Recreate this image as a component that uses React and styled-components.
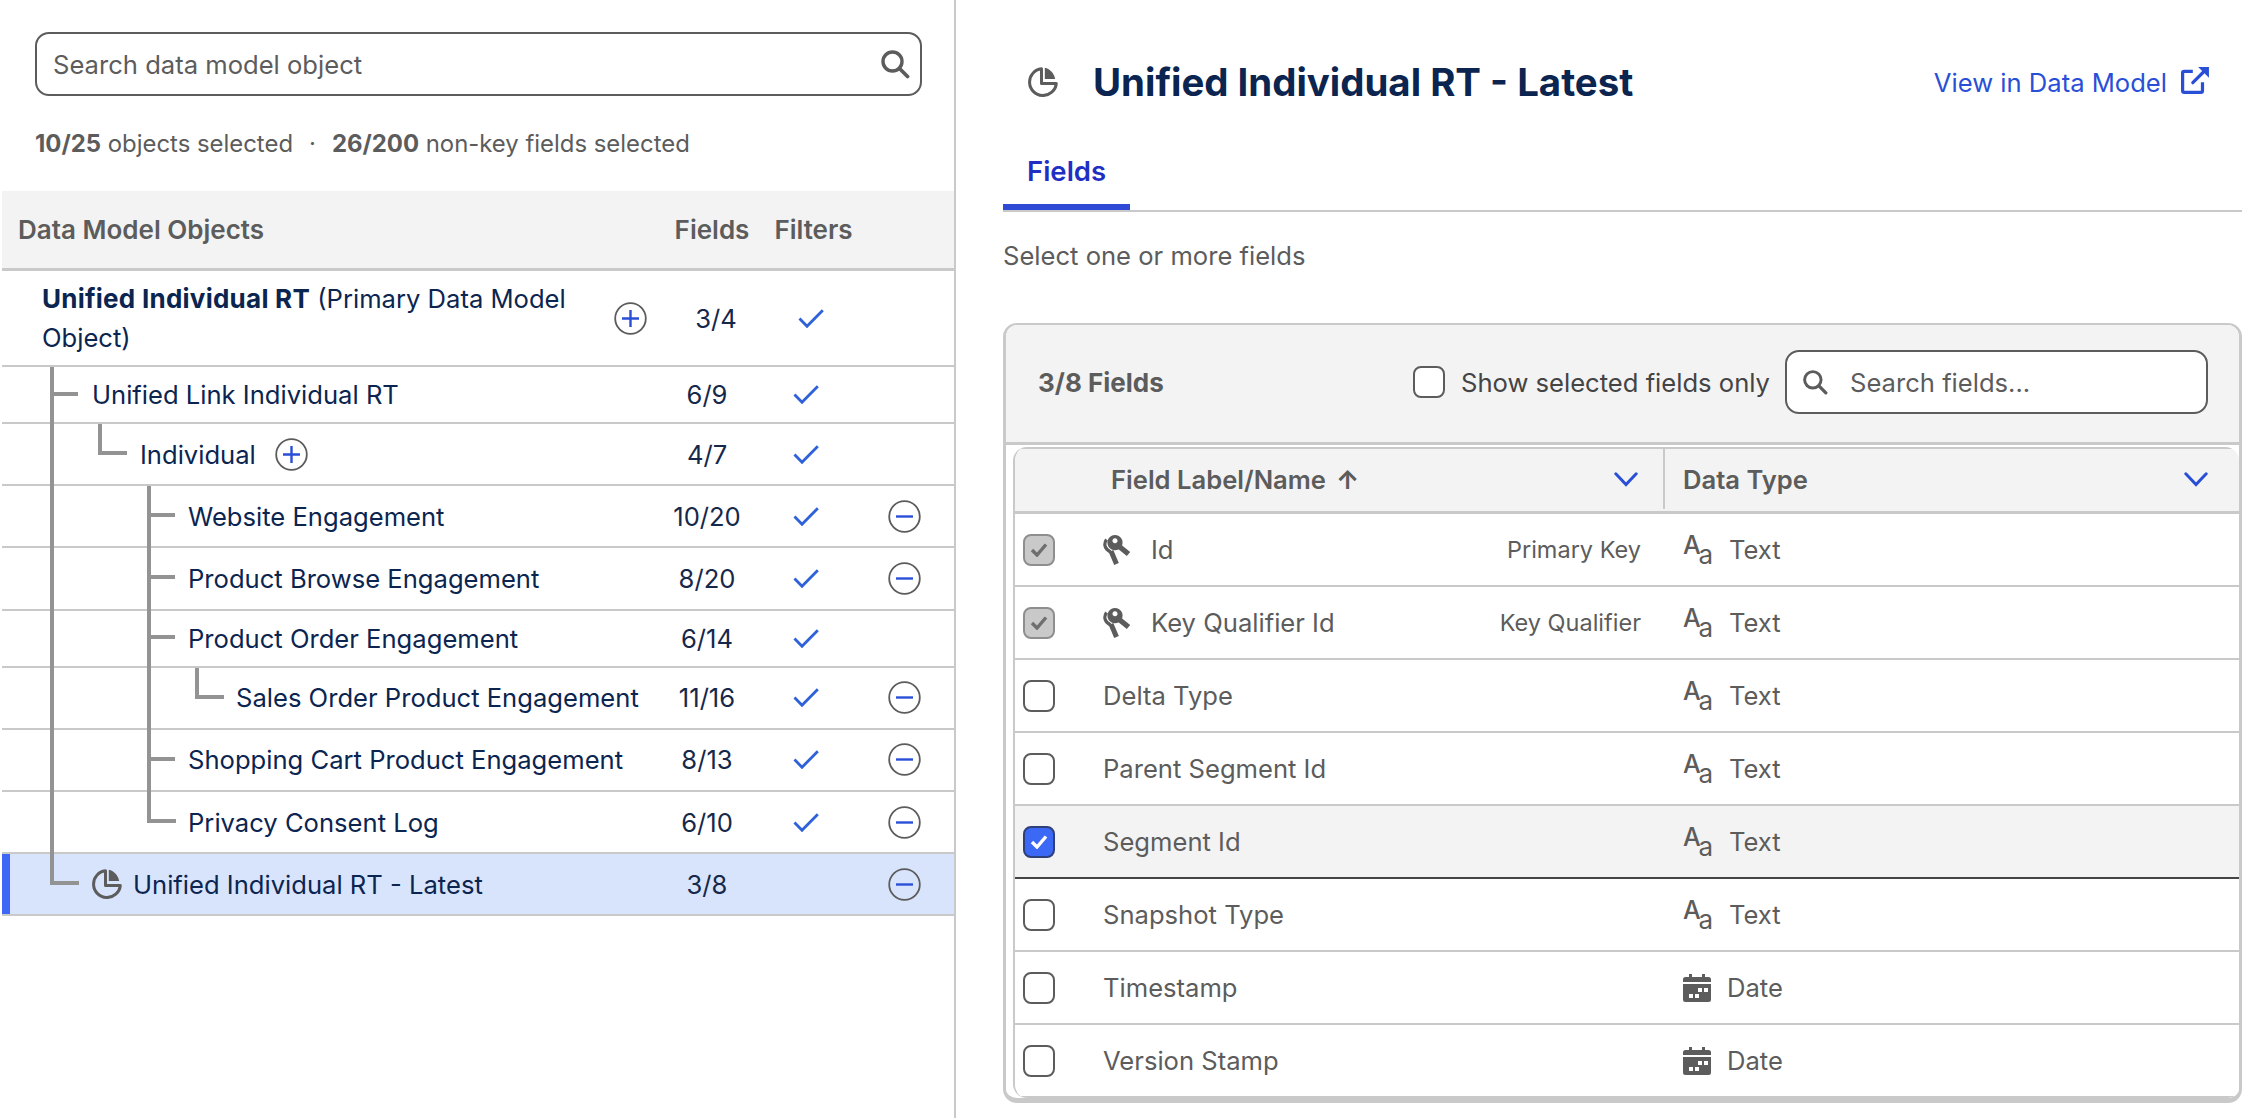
import React from "react";
import styled, { createGlobalStyle } from "styled-components";

const GlobalStyle = createGlobalStyle`
  html, body {
    margin: 0;
    padding: 0;
    background: #fff;
    font-family: Inter, "Liberation Sans", sans-serif;
  }
  * {
    box-sizing: border-box;
  }
`;

const Page = styled.div`
  display: flex;
  width: 2266px;
  height: 1118px;
  overflow: hidden;
`;

/* left side */
const LeftPanel = styled.div`
  width: 956px;
  flex-shrink: 0;
  padding-left: 2px;
  border-right: 2px solid #c9c9c9;
`;

const SearchArea = styled.div`
  padding: 32px 32px 0 33px;
`;

const SearchBox = styled.div`
  display: flex;
  align-items: center;
  justify-content: space-between;
  height: 64px;
  padding: 0 10px 0 16px;
  border: 2px solid #5c5c5c;
  border-radius: 14px;
  background: #fff;
`;

const Placeholder = styled.span`
  font-size: 25.6px;
  color: #5c5c5c;
`;

const Stats = styled.div`
  margin-top: 32px;
  height: 32px;
  line-height: 32px;
  font-size: 23.9px;
  color: #5c5c5c;

  b {
    font-weight: 700;
  }
  i {
    font-style: normal;
    margin: 0 16px;
  }
`;

const TableHead = styled.div`
  display: grid;
  grid-template-columns: 1fr 100px 103px 89px;
  align-items: center;
  margin-top: 31px;
  height: 80px;
  padding-left: 16px;
  background: #f3f3f3;
  border-bottom: 3px solid #c9c9c9;
  font-size: 26px;
  font-weight: 600;
  color: #5c5c5c;
`;

const HeadCell = styled.span`
  text-align: center;
`;

const Row = styled.div`
  position: relative;
  display: grid;
  grid-template-columns: ${(p) => (p.$primary ? "1fr 100px 90px 98px" : "1fr 100px 98px 99px")};
  align-items: center;
  padding: 8px 0 8px ${(p) => p.$indent}px;
  border-bottom: 2px solid #c9c9c9;
  background: ${(p) => (p.$selected ? "#d8e4fc" : "#fff")};
  box-shadow: ${(p) => (p.$selected ? "inset 8px 0 0 #3c68f5" : "none")};
  font-size: 25.6px;
  line-height: 39px;
  color: #0b2550;
`;

const NameCell = styled.div`
  display: flex;
  align-items: center;
  gap: ${(p) => (p.$wide ? "19px" : "16px")};
`;

const PrimaryName = styled.div`
  width: 556px;

  b {
    font-size: 26px;
    letter-spacing: 0.25px;
    font-weight: 700;
  }
`;

const CountCell = styled.div`
  text-align: center;
  color: #16284a;
`;

const IconCell = styled.div`
  display: flex;
  justify-content: center;
  align-items: center;
`;

const RoundButton = styled.span`
  display: flex;
  align-items: center;
  justify-content: center;
  height: 44.2px;
`;

/* tree connector lines sit on top of the row borders */
const Guide = styled.span`
  position: absolute;
  top: 0;
  bottom: -2px;
  left: ${(p) => p.$x - 2}px;
  width: 4px;
  background: #939393;
`;

const Tick = styled.span`
  position: absolute;
  top: calc(50% - 3px);
  left: ${(p) => p.$x - 2}px;
  width: 28px;
  height: 4px;
  background: #939393;
`;

const Elbow = styled.span`
  position: absolute;
  top: 0;
  left: ${(p) => p.$x - 2}px;
  width: 29px;
  height: calc(50% + 1px);
  border-left: 4px solid #939393;
  border-bottom: 4px solid #939393;
`;

const RowIcon = styled.span`
  display: flex;
  margin-right: -5px;
`;

/* right side */
const RightPanel = styled.div`
  flex: 1;
  min-width: 0;
  padding: 52px 24px 0 47px;
`;

const TitleRow = styled.div`
  display: flex;
  align-items: center;
  height: 60px;
  padding: 0 32px 0 25px;
`;

const Title = styled.h1`
  flex: 1;
  margin: 0 0 0 35px;
  font-size: 38.4px;
  font-weight: 700;
  color: #0b2550;
`;

const ViewLink = styled.a`
  display: flex;
  align-items: center;
  gap: 14px;
  font-size: 25.6px;
  color: #2a4fd7;

  svg {
    margin-top: -5px;
  }
`;

const Tabs = styled.div`
  display: flex;
  margin-top: 24px;
  border-bottom: 2px solid #c9c9c9;
`;

const Tab = styled.div`
  padding: 18px 24px 0;
  height: 74px;
  line-height: 34px;
  font-size: 27.5px;
  font-weight: 600;
  color: #1f2fc4;
  border-bottom: 6px solid #2f4bd6;
`;

const Hint = styled.div`
  margin-top: 30px;
  line-height: 28px;
  font-size: 25.6px;
  color: #5c5c5c;
`;

const Card = styled.div`
  margin-top: 53px;
  height: 780px;
  border: 3px solid #c9c9c9;
  border-top-width: 2px;
  border-bottom-width: 5px;
  border-radius: 14px;
  background: #fff;
  overflow: hidden;
`;

const Toolbar = styled.div`
  display: flex;
  align-items: center;
  height: 120px;
  padding: 0 31px 3px 32px;
  background: #f3f3f3;
  border-bottom: 3px solid #c9c9c9;
`;

const ToolbarCount = styled.span`
  flex: 1;
  font-size: 26px;
  font-weight: 700;
  color: #5c5c5c;
`;

const ShowSelected = styled.label`
  display: flex;
  align-items: center;
  gap: 16px;
  margin-right: 15px;
  font-size: 25.6px;
  color: #444;
`;

const CheckBox = styled.span`
  display: flex;
  align-items: center;
  justify-content: center;
  width: 32px;
  height: 32px;
  border: 2px solid ${(p) => (p.$state === "checked" ? "#2f3f78" : p.$state === "locked" ? "#8e8e8e" : "#5c5c5c")};
  border-radius: 8px;
  background: ${(p) => (p.$state === "checked" ? "#3b68f5" : p.$state === "locked" ? "#c9c9c9" : "#fff")};
`;

const FieldSearch = styled.div`
  display: flex;
  align-items: center;
  gap: 22px;
  width: 423px;
  height: 64px;
  padding-left: 15px;
  border: 2px solid #5c5c5c;
  border-radius: 14px;
  background: #fff;
`;

const FieldTable = styled.div`
  margin: 2px 0 0 7px;
  border-left: 2px solid #c9c9c9;
  border-radius: 14px 14px 0 14px;
  overflow: hidden;
`;

const FieldHead = styled.div`
  display: grid;
  grid-template-columns: 88px 560px 1fr;
  height: 67px;
  padding-bottom: 2px;
  align-items: center;
  background: #f3f3f3;
  border-top: 2px solid #c9c9c9;
  border-bottom: 3px solid #c9c9c9;
  font-size: 25.6px;
  font-weight: 600;
  color: #5c5c5c;
`;

const FieldHeadCell = styled.div`
  display: flex;
  align-items: center;
  justify-content: space-between;
  height: 60px;
  padding: 0 ${(p) => p.$right}px 0 ${(p) => p.$left}px;
  border-left: ${(p) => (p.$divided ? "2px solid #c9c9c9" : "none")};
`;

const SortArrow = styled.span`
  margin-left: 10px;
  font-weight: 700;
`;

const FieldRow = styled.div`
  display: grid;
  grid-template-columns: 88px 560px 1fr;
  align-items: center;
  height: 73px;
  background: ${(p) => (p.$active ? "#f3f3f3" : "#fff")};
  border-bottom: 2px solid ${(p) => (p.$active ? "#444" : "#c9c9c9")};
  font-size: 25.6px;
  color: #5c5c5c;
`;

const CheckCell = styled.div`
  padding-left: 8px;
`;

const LabelCell = styled.div`
  display: flex;
  align-items: center;
  gap: 20px;
  padding-right: 22px;
`;

const FieldName = styled.span`
  flex: 1;
`;

const KeyRole = styled.span`
  font-size: 23.5px;
`;

const TypeCell = styled.div`
  display: flex;
  align-items: center;
  gap: 16px;
  padding-left: 20px;
`;

const TypeGlyph = styled.span`
  position: relative;
  display: block;
  width: 30px;
  height: 30px;
  color: #5c5c5c;
`;

const GlyphUpper = styled.span`
  position: absolute;
  top: 0;
  left: 0;
  line-height: 20px;
  font-size: 25px;
  font-weight: 500;
`;

const GlyphLower = styled.span`
  position: absolute;
  right: 0;
  bottom: 0;
  line-height: 20px;
  font-size: 26px;
`;

const Check = () => (
  <svg width="26" height="19" viewBox="0 0 26 19" fill="none">
    <path d="M1.5 9.5 L9 17.3 L24.8 1.2" stroke="#2f62d8" strokeWidth="2.8" />
  </svg>
);

const RoundIcon = ({ plus }) => (
  <svg width="33" height="33" viewBox="0 0 33 33" fill="none">
    <circle cx="16.5" cy="16.5" r="15.3" stroke="#5c5c5c" strokeWidth="1.8" />
    <path d={plus ? "M8 16.5 H25 M16.5 8 V25" : "M8 16.5 H25"} stroke="#2a4fd7" strokeWidth="2.4" />
  </svg>
);

const PieIcon = () => (
  <svg width="30" height="30" viewBox="0 0 30 30" fill="none">
    <path d="M13.5 1.8 A13.4 13.4 0 1 0 28.3 16.5 L13.5 16.5 Z" stroke="#5c5c5c" strokeWidth="3" strokeLinejoin="round" />
    <path d="M16.8 0.8 C21.8 1.8 25.8 6 27.2 12 L16.8 12 Z" fill="#5c5c5c" />
  </svg>
);

const SearchIcon = ({ size = 30 }) => (
  <svg width={size} height={size} viewBox="0 0 30 30" fill="none">
    <circle cx="12.5" cy="12.5" r="9.5" stroke="#5c5c5c" strokeWidth="3.4" />
    <path d="M19.5 19.5 L27.5 27.5" stroke="#5c5c5c" strokeWidth="3.8" strokeLinecap="round" />
  </svg>
);

const ExternalIcon = () => (
  <svg width="29" height="28" viewBox="0 0 27 26" fill="none">
    <path d="M11 5 H3 a1.5 1.5 0 0 0 -1.5 1.5 V23 a1.5 1.5 0 0 0 1.5 1.5 H18.5 a1.5 1.5 0 0 0 1.5 -1.5 V15" stroke="#2a4fd7" strokeWidth="3" />
    <path d="M11 15.5 L23.5 3" stroke="#2a4fd7" strokeWidth="3" strokeLinecap="round" />
    <path d="M16 0.8 H26 V10.8 Z" fill="#2a4fd7" />
  </svg>
);

const Chevron = () => (
  <svg width="24" height="15" viewBox="0 0 24 15" fill="none">
    <path d="M1.8 1.8 L12 12.5 L22.2 1.8" stroke="#2a4fd7" strokeWidth="3" strokeLinecap="round" />
  </svg>
);

const TickMark = ({ color }) => (
  <svg width="18" height="15" viewBox="0 0 18 15" fill="none">
    <path d="M2 8 L7 13 L16 2.5" stroke={color} strokeWidth="3.4" />
  </svg>
);

const KeysIcon = () => (
  <svg width="28" height="30" viewBox="0 0 28 30" fill="none">
    <path
      fill="#5c5c5c"
      fillRule="evenodd"
      d="M12 0 a7.6 7.6 0 1 1 -0.01 0 Z M12 3.2 a2.5 2.5 0 1 0 0.01 0 Z"
    />
    <path d="M15 10.5 L25.5 19" stroke="#5c5c5c" strokeWidth="5.4" />
    <path d="M3.5 4.5 C0.5 9 1.5 14 7.5 17" stroke="#5c5c5c" strokeWidth="3.2" />
    <path d="M8 16 L13.5 29" stroke="#5c5c5c" strokeWidth="5" />
  </svg>
);

const CalendarIcon = () => (
  <svg width="28" height="30" viewBox="0 0 28 30" fill="#5c5c5c">
    <path
      fillRule="evenodd"
      d="M0 11 H28 V26.5 a2.5 2.5 0 0 1 -2.5 2.5 H2.5 a2.5 2.5 0 0 1 -2.5 -2.5 Z M15 15 h4 v4 h-4 Z M21 15 h4 v4 h-4 Z M6 21 h4 v4 h-4 Z M12 21 h4 v4 h-4 Z"
    />
    <path d="M6 1 h3 v3 H19 V1 h3 v3 h3.5 a2.5 2.5 0 0 1 2.5 2.5 V9 H0 V6.5 A2.5 2.5 0 0 1 2.5 4 H6 Z" />
  </svg>
);

const objects = [
  { name: "Unified Link Individual RT", count: "6/9", filter: true, indent: 90, guides: [50], tick: 50 },
  { name: "Individual", count: "4/7", filter: true, indent: 138, guides: [50], elbow: 98, button: "plus" },
  { name: "Website Engagement", count: "10/20", filter: true, indent: 186, guides: [50, 147], tick: 147, button: "minus" },
  { name: "Product Browse Engagement", count: "8/20", filter: true, indent: 186, guides: [50, 147], tick: 147, button: "minus" },
  { name: "Product Order Engagement", count: "6/14", filter: true, indent: 186, guides: [50, 147], tick: 147 },
  { name: "Sales Order Product Engagement", count: "11/16", filter: true, indent: 234, guides: [50, 147], elbow: 195, button: "minus" },
  { name: "Shopping Cart Product Engagement", count: "8/13", filter: true, indent: 186, guides: [50, 147], tick: 147, button: "minus" },
  { name: "Privacy Consent Log", count: "6/10", filter: true, indent: 186, guides: [50], elbow: 147, button: "minus" },
  { name: "Unified Individual RT - Latest", count: "3/8", indent: 90, elbow: 50, button: "minus", selected: true, pie: true },
];

const fields = [
  { name: "Id", state: "locked", role: "Primary Key", type: "Text" },
  { name: "Key Qualifier Id", state: "locked", role: "Key Qualifier", type: "Text" },
  { name: "Delta Type", type: "Text" },
  { name: "Parent Segment Id", type: "Text" },
  { name: "Segment Id", state: "checked", type: "Text", active: true },
  { name: "Snapshot Type", type: "Text" },
  { name: "Timestamp", type: "Date" },
  { name: "Version Stamp", type: "Date" },
];

function ObjectRow({ item }) {
  const showInline = item.button === "plus";
  return (
    <Row $indent={item.indent} $selected={item.selected}>
      {(item.guides || []).map((x) => (
        <Guide key={x} $x={x} />
      ))}
      {item.tick && <Tick $x={item.tick} />}
      {item.elbow && <Elbow $x={item.elbow} />}
      <NameCell $wide={showInline}>
        {item.pie && (
          <RowIcon>
            <PieIcon />
          </RowIcon>
        )}
        {item.name}
        {showInline && (
          <RoundButton>
            <RoundIcon plus />
          </RoundButton>
        )}
      </NameCell>
      <CountCell>{item.count}</CountCell>
      <IconCell>{item.filter && <Check />}</IconCell>
      <IconCell>
        {item.button === "minus" && (
          <RoundButton>
            <RoundIcon />
          </RoundButton>
        )}
      </IconCell>
    </Row>
  );
}

function FieldLine({ field }) {
  return (
    <FieldRow $active={field.active}>
      <CheckCell>
        <CheckBox $state={field.state}>
          {field.state === "locked" && <TickMark color="#6f6f6f" />}
          {field.state === "checked" && <TickMark color="#fff" />}
        </CheckBox>
      </CheckCell>
      <LabelCell>
        {field.role && <KeysIcon />}
        <FieldName>{field.name}</FieldName>
        {field.role && <KeyRole>{field.role}</KeyRole>}
      </LabelCell>
      <TypeCell>
        {field.type === "Text" ? (
          <TypeGlyph>
            <GlyphUpper>A</GlyphUpper>
            <GlyphLower>a</GlyphLower>
          </TypeGlyph>
        ) : (
          <CalendarIcon />
        )}
        {field.type}
      </TypeCell>
    </FieldRow>
  );
}

export default function App() {
  return (
    <Page>
      <GlobalStyle />
      <LeftPanel>
        <SearchArea>
          <SearchBox>
            <Placeholder>Search data model object</Placeholder>
            <SearchIcon />
          </SearchBox>
          <Stats>
            <b>10/25</b> objects selected<i>·</i>
            <b>26/200</b> non-key fields selected
          </Stats>
        </SearchArea>
        <TableHead>
          <span>Data Model Objects</span>
          <HeadCell>Fields</HeadCell>
          <HeadCell>Filters</HeadCell>
        </TableHead>
        <Row $indent={40} $primary>
          <NameCell>
            <PrimaryName>
              <b>Unified Individual RT</b> (Primary Data Model
              <br />
              Object)
            </PrimaryName>
            <RoundButton>
              <RoundIcon plus />
            </RoundButton>
          </NameCell>
          <CountCell>3/4</CountCell>
          <IconCell>
            <Check />
          </IconCell>
        </Row>
        {objects.map((item) => (
          <ObjectRow key={item.name} item={item} />
        ))}
      </LeftPanel>
      <RightPanel>
        <TitleRow>
          <PieIcon />
          <Title>Unified Individual RT - Latest</Title>
          <ViewLink>
            View in Data Model
            <ExternalIcon />
          </ViewLink>
        </TitleRow>
        <Tabs>
          <Tab>Fields</Tab>
        </Tabs>
        <Hint>Select one or more fields</Hint>
        <Card>
          <Toolbar>
            <ToolbarCount>3/8 Fields</ToolbarCount>
            <ShowSelected>
              <CheckBox />
              Show selected fields only
            </ShowSelected>
            <FieldSearch>
              <SearchIcon size={26} />
              <Placeholder>Search fields...</Placeholder>
            </FieldSearch>
          </Toolbar>
          <FieldTable>
            <FieldHead>
              <span />
              <FieldHeadCell $left={8} $right={25}>
                <span>
                  Field Label/Name<SortArrow>↑</SortArrow>
                </span>
                <Chevron />
              </FieldHeadCell>
              <FieldHeadCell $left={18} $right={31} $divided>
                <span>Data Type</span>
                <Chevron />
              </FieldHeadCell>
            </FieldHead>
            {fields.map((field) => (
              <FieldLine key={field.name} field={field} />
            ))}
          </FieldTable>
        </Card>
      </RightPanel>
    </Page>
  );
}
